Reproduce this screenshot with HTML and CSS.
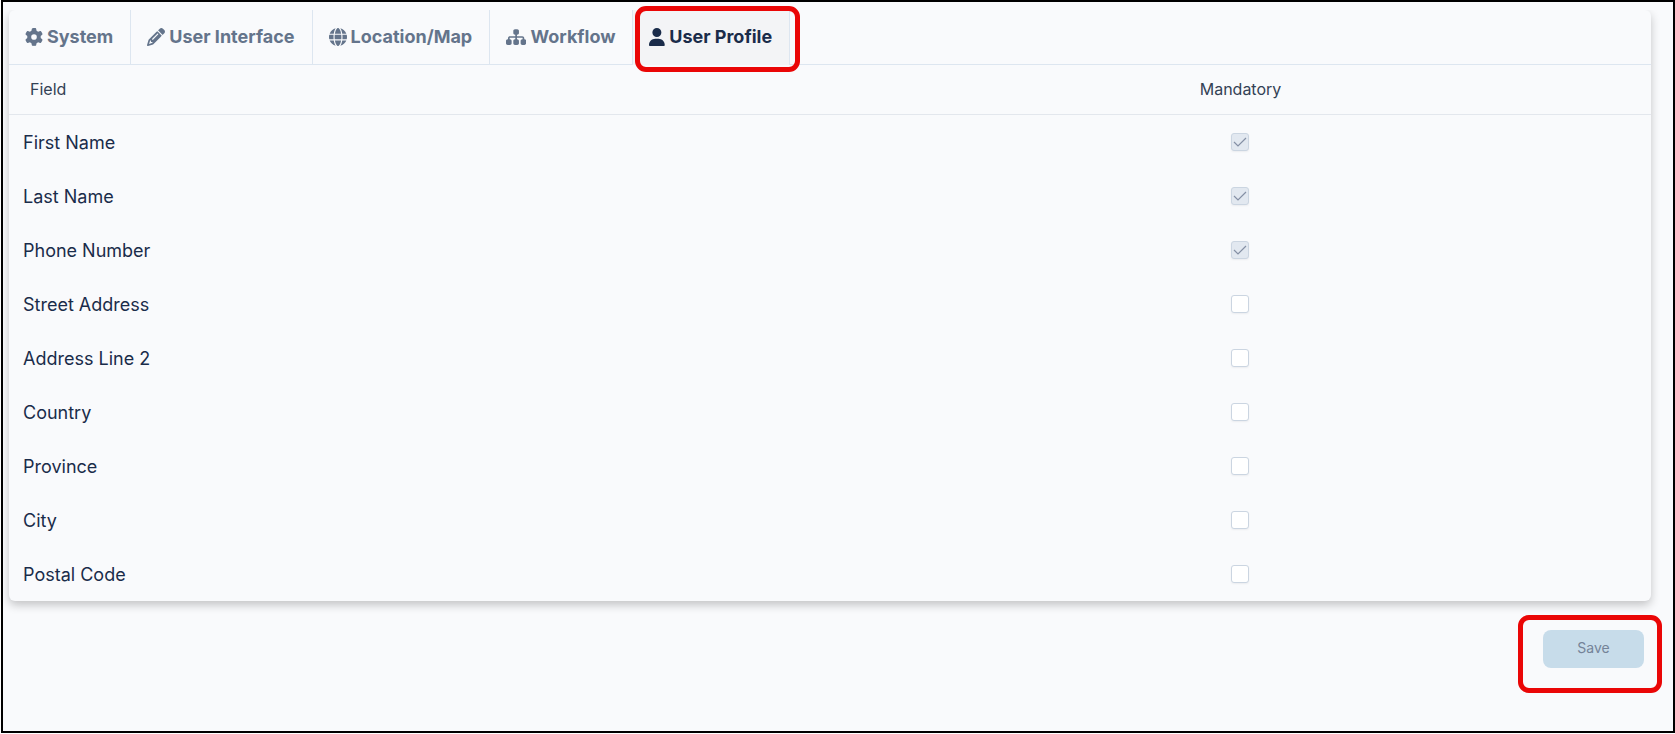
FILE: index.html
```html
<!DOCTYPE html>
<html lang="en">
<head>
<meta charset="utf-8">
<meta name="viewport" content="width=device-width, initial-scale=1">
<title>User Profile settings</title>
<link rel="stylesheet" href="styles.css">
</head>
<body>
<main class="page">
  <section class="card">
    <nav class="tabs" role="tablist">
      <button class="tab" type="button" role="tab">
        <svg class="icon" viewBox="0 0 512 512" aria-hidden="true"><path d="M495.9 166.6c3.2 8.7 .5 18.4-6.4 24.6l-43.3 39.4c1.1 8.3 1.7 16.8 1.7 25.4s-.6 17.1-1.7 25.4l43.3 39.4c6.9 6.2 9.6 15.9 6.4 24.6c-4.4 11.9-9.7 23.3-15.8 34.3l-4.7 8.1c-6.6 11-14 21.4-22.1 31.2c-5.9 7.2-15.7 9.6-24.5 6.8l-55.7-17.7c-13.4 10.3-28.2 18.9-44 25.4l-12.5 57.1c-2 9.1-9 16.3-18.2 17.8c-13.8 2.3-28 3.5-42.5 3.5s-28.7-1.2-42.5-3.5c-9.2-1.5-16.2-8.7-18.2-17.8l-12.5-57.1c-15.8-6.5-30.6-15.1-44-25.4L83.1 425.9c-8.8 2.8-18.6 .3-24.5-6.8c-8.1-9.8-15.5-20.2-22.1-31.2l-4.7-8.1c-6.1-11-11.4-22.4-15.8-34.3c-3.2-8.7-.5-18.4 6.4-24.6l43.3-39.4C64.6 273.1 64 264.6 64 256s.6-17.1 1.7-25.4L22.4 191.2c-6.9-6.2-9.6-15.9-6.4-24.6c4.4-11.9 9.7-23.3 15.8-34.3l4.7-8.1c6.6-11 14-21.4 22.1-31.2c5.9-7.2 15.7-9.6 24.5-6.8l55.7 17.7c13.4-10.3 28.2-18.9 44-25.4l12.5-57.1c2-9.1 9-16.3 18.2-17.8C227.3 1.2 241.5 0 256 0s28.7 1.2 42.5 3.5c9.2 1.5 16.2 8.7 18.2 17.8l12.5 57.1c15.8 6.5 30.6 15.1 44 25.4l55.7-17.7c8.8-2.8 18.6-.3 24.5 6.8c8.1 9.8 15.5 20.2 22.1 31.2l4.7 8.1c6.1 11 11.4 22.4 15.8 34.3zM256 336a80 80 0 1 0 0-160 80 80 0 1 0 0 160z"/></svg>
        <span>System</span>
      </button>
      <button class="tab" type="button" role="tab">
        <svg class="icon" viewBox="0 0 512 512" aria-hidden="true"><path d="M410.3 231l11.3-11.3-33.9-33.9-62.1-62.1L291.7 89.8l-11.3 11.3-22.6 22.6L58.6 322.9c-10.4 10.4-18 23.3-22.2 37.4L1 480.7c-2.5 8.4-.2 17.5 6.1 23.7s15.3 8.5 23.7 6.1l120.3-35.4c14.1-4.2 27-11.8 37.4-22.2L387.7 253.7 410.3 231zM160 399.4l-9.1 22.7c-4 3.1-8.5 5.4-13.3 6.9L59.4 452l23-78.1c1.4-4.9 3.8-9.4 6.9-13.3l22.7-9.1v32c0 8.8 7.2 16 16 16h32zM362.7 18.7L348.3 33.2 325.7 55.8 314.3 67.1l33.9 33.9 62.1 62.1 33.9 33.9 11.3-11.3 22.6-22.6 14.5-14.5c25-25 25-65.5 0-90.5L453.3 18.7c-25-25-65.5-25-90.5 0zm-47.4 168l-144 144c-6.2 6.2-16.4 6.2-22.6 0s-6.2-16.4 0-22.6l144-144c6.2-6.2 16.4-6.2 22.6 0s6.2 16.4 0 22.6z"/></svg>
        <span>User Interface</span>
      </button>
      <button class="tab" type="button" role="tab">
        <svg class="icon" viewBox="0 0 512 512" aria-hidden="true"><path d="M352 256c0 22.2-1.2 43.6-3.3 64H163.3c-2.2-20.4-3.3-41.8-3.3-64s1.2-43.6 3.3-64H348.7c2.2 20.4 3.3 41.8 3.3 64zm28.8-64H503.9c5.3 20.5 8.1 41.9 8.1 64s-2.8 43.5-8.1 64H380.8c2.1-20.6 3.2-42 3.2-64s-1.1-43.4-3.2-64zm112.6-32H376.7c-10-63.9-29.8-117.4-55.3-151.6c78.3 20.7 142 77.5 171.9 151.6zm-149.1 0H167.7c6.1-36.4 15.5-68.6 27-94.7c10.5-23.6 22.2-40.7 33.5-51.5C239.4 3.2 248.7 0 256 0s16.6 3.2 27.8 13.8c11.3 10.8 23 27.9 33.5 51.5c11.6 26 20.9 58.2 27 94.7zm-209 0H18.6C48.6 85.9 112.2 29.1 190.6 8.4C165.1 42.6 145.3 96.1 135.3 160zM8.1 192H131.2c-2.1 20.6-3.2 42-3.2 64s1.1 43.4 3.2 64H8.1C2.8 299.5 0 278.1 0 256s2.8-43.5 8.1-64zM194.7 446.6c-11.6-26-20.9-58.2-27-94.6H344.3c-6.1 36.4-15.5 68.6-27 94.6c-10.5 23.6-22.2 40.7-33.5 51.5C272.6 508.8 263.3 512 256 512s-16.6-3.2-27.8-13.8c-11.3-10.8-23-27.9-33.5-51.5zM135.3 352c10 63.9 29.8 117.4 55.3 151.6C112.2 482.9 48.6 426.1 18.6 352H135.3zm358.1 0c-30 74.1-93.6 130.9-171.9 151.6c25.5-34.2 45.2-87.7 55.3-151.6H493.4z"/></svg>
        <span>Location/Map</span>
      </button>
      <button class="tab" type="button" role="tab">
        <svg class="icon" viewBox="0 0 576 512" aria-hidden="true"><path d="M208 80c0-26.5 21.5-48 48-48h64c26.5 0 48 21.5 48 48v64c0 26.5-21.5 48-48 48h-8v40H464c30.9 0 56 25.1 56 56v32h8c26.5 0 48 21.5 48 48v64c0 26.5-21.5 48-48 48H464c-26.5 0-48-21.5-48-48V368c0-26.5 21.5-48 48-48h8V288c0-4.4-3.6-8-8-8H312v40h8c26.5 0 48 21.5 48 48v64c0 26.5-21.5 48-48 48H256c-26.5 0-48-21.5-48-48V368c0-26.5 21.5-48 48-48h8V280H112c-4.4 0-8 3.6-8 8v32h8c26.5 0 48 21.5 48 48v64c0 26.5-21.5 48-48 48H48c-26.5 0-48-21.5-48-48V368c0-26.5 21.5-48 48-48h8V288c0-30.9 25.1-56 56-56H264V192h-8c-26.5 0-48-21.5-48-48V80z"/></svg>
        <span>Workflow</span>
      </button>
      <button class="tab tab-active" type="button" role="tab" aria-selected="true">
        <svg class="icon" viewBox="0 0 448 512" aria-hidden="true"><path d="M224 256A128 128 0 1 0 224 0a128 128 0 1 0 0 256zm-45.7 48C79.8 304 0 383.8 0 482.3C0 498.7 13.3 512 29.7 512H418.3c16.4 0 29.7-13.3 29.7-29.7C448 383.8 368.2 304 269.7 304H178.3z"/></svg>
        <span>User Profile</span>
        <span class="highlight highlight-tab"></span>
      </button>
    </nav>
    <table class="fields">
      <thead>
        <tr><th scope="col">Field</th><th scope="col" class="mandatory">Mandatory</th></tr>
      </thead>
      <tbody>
        <tr><td><label for="first-name">First Name</label></td><td class="mandatory"><input class="check" type="checkbox" id="first-name" checked disabled></td></tr>
        <tr><td><label for="last-name">Last Name</label></td><td class="mandatory"><input class="check" type="checkbox" id="last-name" checked disabled></td></tr>
        <tr><td><label for="phone">Phone Number</label></td><td class="mandatory"><input class="check" type="checkbox" id="phone" checked disabled></td></tr>
        <tr><td><label for="street">Street Address</label></td><td class="mandatory"><input class="check" type="checkbox" id="street"></td></tr>
        <tr><td><label for="line2">Address Line 2</label></td><td class="mandatory"><input class="check" type="checkbox" id="line2"></td></tr>
        <tr><td><label for="country">Country</label></td><td class="mandatory"><input class="check" type="checkbox" id="country"></td></tr>
        <tr><td><label for="province">Province</label></td><td class="mandatory"><input class="check" type="checkbox" id="province"></td></tr>
        <tr><td><label for="city">City</label></td><td class="mandatory"><input class="check" type="checkbox" id="city"></td></tr>
        <tr><td><label for="postal">Postal Code</label></td><td class="mandatory"><input class="check" type="checkbox" id="postal"></td></tr>
      </tbody>
    </table>
  </section>
  <div class="actions">
    <div class="save-wrap">
      <button class="save" type="button" disabled>Save</button>
      <span class="highlight highlight-save"></span>
    </div>
  </div>
</main>
</body>
</html>
```
FILE: styles.css
```css
* {
  box-sizing: border-box;
}

body {
  margin: 0;
  background: #fff;
  color: #1a2c4a;
  font-family: Inter, "Liberation Sans", sans-serif;
}

.page {
  min-height: calc(100vh - 1px);
  margin: 0 0 1px 1px;
  padding: 8px 22px 0 6px;
  border: 2px solid #000;
  background: #f9fafc;
}

.card {
  position: relative;
  isolation: isolate;
}

/* Shadow falls to the sides and below, never above the tab strip */
.card::before {
  content: "";
  position: absolute;
  inset: 0;
  z-index: -1;
  border-radius: 6px;
  background: #f9fafc;
  box-shadow: 0 4px 10px rgba(0, 0, 0, 0.22);
  clip-path: inset(0 -20px -20px -20px);
}

.tabs {
  display: flex;
  height: 55px;
  border-bottom: 1px solid #dde6f0;
}

.tab {
  position: relative;
  display: flex;
  align-items: center;
  gap: 4px;
  height: 54px;
  padding: 0 17px 0 16px;
  border: 0;
  border-right: 1px solid #dde6f0;
  background: none;
  color: #64748b;
  font: 700 18px/24px Inter, "Liberation Sans", sans-serif;
  white-space: nowrap;
}

.tab-active {
  height: 55px;
  padding-bottom: 1px;
  background: #f3f4f6;
  color: #1a2c4a;
}

.icon {
  height: 18px;
  fill: currentColor;
}

.highlight {
  position: absolute;
  border: 5px solid #ea0606;
  border-radius: 11px;
  pointer-events: none;
}

.highlight-tab {
  inset: -4px -11px -7px 2px;
}

.highlight-save {
  inset: -15px -18px -25px -25px;
}

.fields {
  width: 100%;
  border-collapse: separate;
  border-spacing: 0;
  table-layout: fixed;
}

.fields th {
  height: 50px;
  padding: 0 21px 2px;
  border-bottom: 1px solid #e3e7ed;
  color: #334155;
  font-size: 16px;
  font-weight: 400;
  line-height: 24px;
  text-align: left;
}

.fields td {
  height: 54px;
  padding: 2px 14px 0;
  font-size: 18px;
  line-height: 24px;
}

.fields th.mandatory {
  text-align: center;
}

.fields td.mandatory {
  padding: 0 2px 0 0;
}

.check {
  appearance: none;
  display: block;
  width: 18px;
  height: 18px;
  margin: 0 auto;
  border: 1px solid #cbd5e1;
  border-radius: 3px;
  background: #fff;
  box-shadow: 0 1px 2px rgba(15, 23, 42, 0.06);
}

.check:checked {
  background: #e2e8f0 url("data:image/svg+xml,%3Csvg xmlns='http://www.w3.org/2000/svg' viewBox='0 0 16 16'%3E%3Cpath d='M2 8 6 12 14 4' fill='none' stroke='%238590a5' stroke-width='1.2'/%3E%3C/svg%3E") center / 16px no-repeat;
}

.actions {
  display: flex;
  justify-content: flex-end;
  padding: 29px 7px 24px;
}

.save-wrap {
  position: relative;
}

.save {
  display: block;
  min-width: 101px;
  height: 38px;
  padding: 0 24px 2px;
  border: 0;
  border-radius: 8px;
  background: #c7dcea;
  color: #748398;
  font: 400 14px/20px Inter, "Liberation Sans", sans-serif;
}
```
